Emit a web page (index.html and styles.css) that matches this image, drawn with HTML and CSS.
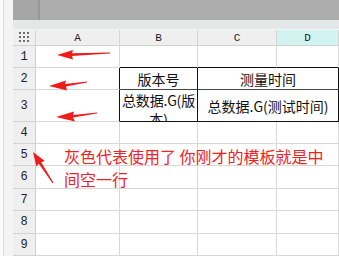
FILE: index.html
```html
<!DOCTYPE html>
<html lang="zh-CN">
<head>
    <meta charset="UTF-8">
    <meta name="viewport" content="width=device-width, initial-scale=1.0">
    <title>模板说明</title>
    <link rel="stylesheet" href="styles.css">
</head>
<body>
    <div class="window">
        <div class="side"></div>
        <div class="main">
            <div class="toolbar"><div class="tool-left"></div></div>
            <div class="formula"></div>
            <div class="sheet">
                <!-- column header -->
                <div class="corner">
                    <svg width="11" height="11" viewBox="0 0 11 11">
                        <rect x="0" y="0" width="2" height="2"/><rect x="4" y="0" width="2" height="2"/><rect x="8" y="0" width="2" height="2"/>
                        <rect x="0" y="4" width="2" height="2"/><rect x="4" y="4" width="2" height="2"/><rect x="8" y="4" width="2" height="2"/>
                        <rect x="0" y="8" width="2" height="2"/><rect x="4" y="8" width="2" height="2"/><rect x="8" y="8" width="2" height="2"/>
                    </svg>
                </div>
                <div class="col-head">A</div>
                <div class="col-head">B</div>
                <div class="col-head">C</div>
                <div class="col-head active">D</div>

                <!-- row 1 -->
                <div class="row-head">1</div>
                <div class="cell"></div>
                <div class="cell t-above"></div>
                <div class="cell t-above"></div>
                <div class="cell t-above"></div>

                <!-- row 2 -->
                <div class="row-head">2</div>
                <div class="cell t-before"></div>
                <div class="cell t-cell t-mid">版本号</div>
                <div class="cell t-cell t-mid span2">测量时间</div>

                <!-- row 3 -->
                <div class="row-head">3</div>
                <div class="cell t-before"></div>
                <div class="cell t-cell t-bottom wrap">总数据.G(版本)</div>
                <div class="cell t-cell t-bottom span2">总数据.G(测试时间)</div>

                <div class="row-head">4</div>
                <div class="cell"></div><div class="cell"></div><div class="cell"></div><div class="cell"></div>
                <div class="row-head">5</div>
                <div class="cell"></div><div class="cell"></div><div class="cell"></div><div class="cell"></div>
                <div class="row-head">6</div>
                <div class="cell"></div><div class="cell"></div><div class="cell"></div><div class="cell"></div>
                <div class="row-head">7</div>
                <div class="cell"></div><div class="cell"></div><div class="cell"></div><div class="cell"></div>
                <div class="row-head">8</div>
                <div class="cell"></div><div class="cell"></div><div class="cell"></div><div class="cell"></div>
                <div class="row-head">9</div>
                <div class="cell"></div><div class="cell"></div><div class="cell"></div><div class="cell"></div>
            </div>
        </div>

        <!-- hand drawn notes over the sheet -->
        <svg class="arrows" width="339" height="256" viewBox="0 0 339 256">
            <polygon points="57,55 73,50 72,53.3 110,52.4 110,53.6 72,56 73,59.5"/>
            <polygon points="49,86 66,80.5 65,84 87,81.4 87,82.6 66,86.6 67,90.5"/>
            <polygon points="56,117 74,111.5 73,115 97,112.4 97,113.6 73,117.6 75,121.5"/>
            <polygon points="33,152 44.8,161.1 41.2,162.2 53.5,182.7 52.5,183.3 38.8,163.8 36.4,166.5"/>
        </svg>
        <div class="note">灰色代表使用了 你刚才的模板就是中<br>间空一行</div>
    </div>
</body>
</html>
```

FILE: styles.css
```css
* {
    box-sizing: border-box;
    margin: 0;
    padding: 0;
}
body {
    width: 339px;
    height: 256px;
    overflow: hidden;
    background: #fff;
    font-family: "Noto Sans CJK SC", sans-serif;
}
.window {
    position: relative;
    display: flex;
    width: 339px;
    height: 256px;
    overflow: hidden;
}

/* left strip */
.side {
    width: 13px;
    flex: none;
    background: #f4f4f4;
    border-left: 3px solid #fafafa;
    box-shadow: inset 1px 0 0 #dcdcdc;
}

.main {
    flex: 1;
    display: flex;
    flex-direction: column;
}
.toolbar {
    height: 20px;
    background: #adadad;
}
.tool-left {
    width: 27px;
    height: 20px;
    background: #a6a6a6;
    border-right: 2px solid #979797;
}
.formula {
    height: 11px;
    background: #e4e7e7;
    border-bottom: 1px solid #f6f6f6;
}

/* sheet grid */
.sheet {
    display: grid;
    grid-template-columns: 23px 84px 78px 79px 62px;
    grid-template-rows: 16px 22px 22px 32px 22px 22px 23px 22px 23px 22px;
    font-size: 14px;
    color: #111;
}
.corner, .col-head, .row-head {
    display: flex;
    align-items: center;
    justify-content: center;
    background: #efefef;
    font-family: "Liberation Mono", monospace;
    font-size: 11px;
    color: #222;
    border-right: 1px solid #d6d6d6;
    border-bottom: 1px solid #d2d2d2;
}
.corner svg {
    fill: #6e6e6e;
}
.col-head.active {
    background: #d2f4f1;
}
.row-head {
    font-size: 12px;
    border-right-color: #cfcfcf;
}
.cell {
    display: flex;
    align-items: center;
    justify-content: center;
    background: #fff;
    border-right: 1px solid #d8d8d8;
    border-bottom: 1px solid #d8d8d8;
    overflow: hidden;
    white-space: nowrap;
}
.span2 {
    grid-column: span 2;
}

/* the bordered table B2:D3 */
.t-above {
    border-bottom-color: #111;
}
.t-before {
    border-right-color: #111;
}
.t-cell {
    border-right-color: #111;
}
.t-mid {
    border-bottom-color: #444;
}
.t-bottom {
    border-bottom-color: #111;
}
.wrap {
    display: block;
    white-space: normal;
    word-break: break-all;
    text-align: center;
    line-height: 19px;
    letter-spacing: -0.2px;
    padding-top: 1px;
}

/* annotations */
.arrows {
    position: absolute;
    left: 0;
    top: 0;
    fill: #f01c1c;
}
.note {
    position: absolute;
    left: 64px;
    top: 145px;
    font-size: 16px;
    line-height: 23px;
    color: #f32222;
    white-space: nowrap;
}
```
